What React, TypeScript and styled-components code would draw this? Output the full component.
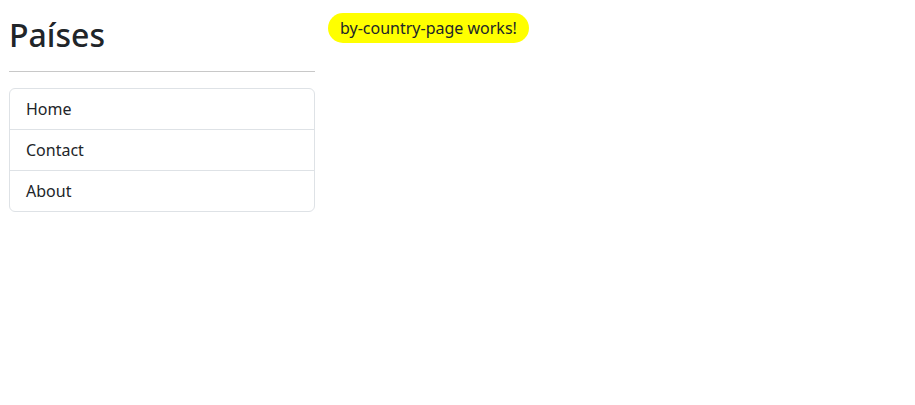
import styled, { createGlobalStyle } from 'styled-components';

const GlobalStyle = createGlobalStyle`
  body {
    margin: 0;
    font-family: "Noto Sans", "Open Sans", sans-serif;
    color: #212529;
    background: #fff;
  }
`;

const links = ['Home', 'Contact', 'About'];

export default function App(): JSX.Element {
  return (
    <>
      <GlobalStyle />
      <Layout>
        <Sidebar>
          <Title>Países</Title>
          <Divider />
          <Menu>
            {links.map((label) => (
              <MenuItem key={label}>{label}</MenuItem>
            ))}
          </Menu>
        </Sidebar>
        <Main>
          <Badge>by-country-page works!</Badge>
        </Main>
      </Layout>
    </>
  );
}

const Layout = styled.div`
  display: flex;
  flex-direction: row;
  align-items: flex-start;
  gap: 13px;
  padding: 13px 9px;
`;

const Sidebar = styled.aside`
  display: flex;
  flex-direction: column;
  width: 306px;
  flex-shrink: 0;
`;

const Title = styled.h2`
  margin: 3px 0 0;
  font-size: 32px;
  font-weight: 500;
  line-height: 38px;
`;

const Divider = styled.hr`
  margin: 17px 0 16px;
  border: 0;
  border-top: 1px solid #c8c8c8;
  height: 0;
`;

const Menu = styled.ul`
  list-style: none;
  margin: 0;
  padding: 0;
  border: 1px solid #dee2e6;
  border-radius: 6px;
  overflow: hidden;
`;

const MenuItem = styled.li`
  padding: 8px 16px;
  font-size: 16px;
  line-height: 24px;
  & + & {
    border-top: 1px solid #dee2e6;
  }
`;

const Main = styled.main`
  display: flex;
  flex: 1;
`;

const Badge = styled.div`
  background: #ffff00;
  border-radius: 15px;
  padding: 3px 12px;
  font-size: 16px;
  line-height: 24px;
`;
